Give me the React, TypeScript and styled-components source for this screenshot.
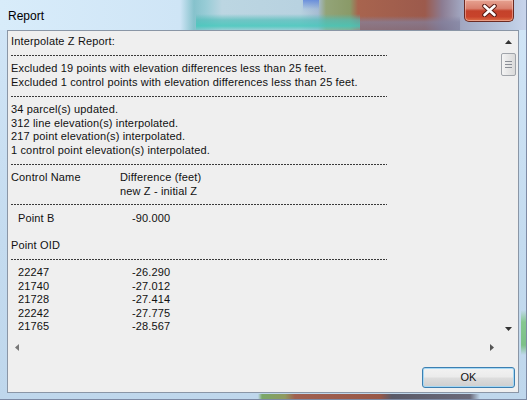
import React from "react";
import styled, { createGlobalStyle } from "styled-components";

const Global = createGlobalStyle`
  html, body { margin: 0; padding: 0; background: #ffffff; }
  body { width: 527px; height: 400px; overflow: hidden; }
`;

const Window = styled.div`
  width: 527px;
  height: 400px;
  box-sizing: border-box;
  display: flex;
  flex-direction: column;
  font-family: "Liberation Sans", Arial, sans-serif;
  color: #111;
  background:
    linear-gradient(90deg, transparent 0 258px, #7aa868 262px, #8f9a60 285px, #a06050 295px, #985848 380px, #5a5a68 392px, #6a6a7a 470px, transparent 480px) 0 100% / 100% 5px no-repeat,
    linear-gradient(180deg, transparent 0 310px, #86c890 322px, #7cc088 345px, transparent 355px) 100% 0 / 5px 100% no-repeat,
    linear-gradient(180deg, #d2e6f7 0%, #c4dbef 60%, #bfd7ec 100%);
  border-right: 1px solid #7d8aa4;
  border-bottom: 1px solid #7d8aa4;
`;

const TitleBar = styled.div`
  height: 30px;
  flex: none;
  display: flex;
  align-items: flex-start;
  justify-content: space-between;
  padding: 0 12px 0 8px;
  box-sizing: border-box;
  background:
    linear-gradient(90deg, rgba(239, 239, 239, 0) 0, rgba(160, 210, 215, 0.0) 100%),
    linear-gradient(180deg, transparent 0 14px, rgba(80, 190, 185, 0.7) 20px, rgba(70, 200, 188, 0.85) 26px, rgba(120, 200, 200, 0.5) 30px) 196px 0 / 164px 100% no-repeat,
    linear-gradient(180deg, transparent 0 16px, rgba(130, 130, 160, 0.7) 22px, rgba(120, 120, 150, 0.6) 30px) 360px 0 / 100px 100% no-repeat,
    linear-gradient(180deg, rgba(90, 130, 220, 0.8) 0, rgba(150, 180, 230, 0.2) 9px, transparent 12px) 303px 0 / 16px 100% no-repeat,
    linear-gradient(90deg, #d8ecfa 0, #cfe5f6 180px, #86c2cc 194px, #98ccd6 206px, #bcd6e2 222px, #b8d2e0 300px, #a6bcd2 318px, #93a478 326px, #8a9a68 350px, #a8644e 358px, #9c5a4c 425px, #8c7c92 442px, #a2a8c2 462px, #bccbe2 512px, #c9d5ec 527px);
`;

const Title = styled.span`
  margin-top: 9px;
  font-size: 12px;
  line-height: 14px;
  color: #000;
`;

const CloseButton = styled.div`
  width: 50px;
  height: 22px;
  box-sizing: border-box;
  border: 1px solid #6b2a22;
  border-top: none;
  border-radius: 0 0 5px 5px;
  background: linear-gradient(180deg, #e6a291 0%, #d9806e 40%, #c4412a 52%, #c8432b 80%, #dd7048 100%);
  box-shadow: inset 0 0 0 1px rgba(255, 220, 210, 0.45);
  display: flex;
  align-items: center;
  justify-content: center;
`;

const Client = styled.div`
  flex: 1;
  margin: 0 7px 6px 7px;
  border: 1px solid #8a96a6;
  background: #efefef;
  display: flex;
  flex-direction: column;
  min-height: 0;
`;

const ReportBox = styled.div`
  height: 325px;
  flex: none;
  margin-right: 1px;
  display: grid;
  grid-template-columns: 1fr 17px;
  grid-template-rows: 1fr 17px;
`;

const Content = styled.div`
  padding: 4px 0 0 3px;
  overflow: hidden;
  font-size: 11px;
  letter-spacing: 0.15px;
  line-height: 13.6px;
  color: #111;
`;

const Line = styled.div`
  height: 13.6px;
  white-space: pre;
`;

const Rule = styled.div`
  height: 13.6px;
  width: 376px;
  display: flex;
  align-items: center;
  &::after {
    content: "";
    display: block;
    width: 100%;
    height: 1px;
    background: repeating-linear-gradient(90deg, #3a3a3a 0 2px, transparent 2px 3px);
  }
`;

const TableRow = styled.div<{ $indent: number; $first: number }>`
  display: grid;
  grid-template-columns: ${(p) => p.$first}px auto;
  padding-left: ${(p) => p.$indent}px;
  height: 13.6px;
  white-space: pre;
`;

const VScroll = styled.div`
  display: flex;
  flex-direction: column;
  align-items: stretch;
`;

const HScroll = styled.div`
  display: flex;
  align-items: center;
  justify-content: space-between;
`;

const ArrowButton = styled.div<{ $h?: number; $w?: number }>`
  height: ${(p) => (p.$h ? `${p.$h}px` : "100%")};
  width: ${(p) => (p.$w ? `${p.$w}px` : "100%")};
  display: flex;
  align-items: center;
  justify-content: center;
  flex: none;
`;

const Track = styled.div`
  flex: 1;
  display: flex;
  flex-direction: column;
  align-items: center;
`;

const Thumb = styled.div`
  margin-top: 1px;
  width: 15px;
  height: 23px;
  box-sizing: border-box;
  border: 1px solid #a0a4aa;
  border-radius: 2px;
  background: linear-gradient(90deg, #f4f4f4, #e6e6e6 50%, #dadada);
  display: flex;
  flex-direction: column;
  align-items: center;
  justify-content: center;
  gap: 2px;
`;

const Grip = styled.span`
  width: 7px;
  height: 1px;
  background: #8a8e96;
`;

const Corner = styled.div``;

const Footer = styled.div`
  flex: 1;
  display: flex;
  justify-content: flex-end;
  align-items: flex-start;
  padding: 11px 3px 0 0;
`;

const OkButton = styled.button`
  width: 93px;
  height: 21px;
  box-sizing: border-box;
  border: 1px solid #3c7fb1;
  border-radius: 3px;
  background: linear-gradient(180deg, #f2f2f2 0%, #ebebeb 48%, #dddddd 52%, #cfcfcf 100%);
  box-shadow: inset 0 0 0 1px #a6d8f4;
  font-family: "Liberation Sans", Arial, sans-serif;
  font-size: 11px;
  color: #111;
  padding: 0;
  line-height: 19px;
`;

const Tri = ({ dir, color = "#333" }: { dir: "up" | "down" | "left" | "right"; color?: string }) => {
  const pts =
    dir === "up"
      ? "0,4 7,4 3.5,0"
      : dir === "down"
      ? "0,0 7,0 3.5,4"
      : dir === "left"
      ? "4,0 4,7 0,3.5"
      : "0,0 0,7 4,3.5";
  const w = dir === "up" || dir === "down" ? 7 : 4;
  const h = dir === "up" || dir === "down" ? 4 : 7;
  return (
    <svg width={w} height={h} viewBox={`0 0 ${w} ${h}`}>
      <polygon points={pts} fill={color} />
    </svg>
  );
};

const CloseX = () => (
  <svg width="15" height="13" viewBox="0 0 15 13">
    <path d="M2.5 2 L12.5 11 M12.5 2 L2.5 11" stroke="#5a1c14" strokeWidth="4.6" strokeLinecap="round" />
    <path d="M2.5 2 L12.5 11 M12.5 2 L2.5 11" stroke="#ffffff" strokeWidth="2.6" strokeLinecap="round" />
  </svg>
);

const points: [string, string][] = [
  ["22247", "-26.290"],
  ["21740", "-27.012"],
  ["21728", "-27.414"],
  ["22242", "-27.775"],
  ["21765", "-28.567"],
];

export default function App() {
  return (
    <>
      <Global />
      <Window>
        <TitleBar>
          <Title>Report</Title>
          <CloseButton>
            <CloseX />
          </CloseButton>
        </TitleBar>
        <Client>
          <ReportBox>
            <Content>
              <Line>Interpolate Z Report:</Line>
              <Rule />
              <Line>Excluded 19 points with elevation differences less than 25 feet.</Line>
              <Line>Excluded 1 control points with elevation differences less than 25 feet.</Line>
              <Rule />
              <Line>34 parcel(s) updated.</Line>
              <Line>312 line elevation(s) interpolated.</Line>
              <Line>217 point elevation(s) interpolated.</Line>
              <Line>1 control point elevation(s) interpolated.</Line>
              <Rule />
              <TableRow $indent={0} $first={109}>
                <span>Control Name</span>
                <span>Difference (feet)</span>
              </TableRow>
              <TableRow $indent={0} $first={109}>
                <span></span>
                <span>new Z - initial Z</span>
              </TableRow>
              <Rule />
              <TableRow $indent={7} $first={114}>
                <span>Point B</span>
                <span>-90.000</span>
              </TableRow>
              <Line> </Line>
              <Line>Point OID</Line>
              <Rule />
              {points.map(([id, v]) => (
                <TableRow key={id} $indent={7} $first={114}>
                  <span>{id}</span>
                  <span>{v}</span>
                </TableRow>
              ))}
            </Content>
            <VScroll>
              <ArrowButton $h={21}>
                <Tri dir="up" />
              </ArrowButton>
              <Track>
                <Thumb>
                  <Grip />
                  <Grip />
                  <Grip />
                </Thumb>
              </Track>
              <ArrowButton $h={21}>
                <Tri dir="down" />
              </ArrowButton>
            </VScroll>
            <HScroll>
              <ArrowButton $w={17}>
                <Tri dir="left" color="#777" />
              </ArrowButton>
              <ArrowButton $w={17}>
                <Tri dir="right" color="#555" />
              </ArrowButton>
            </HScroll>
            <Corner />
          </ReportBox>
          <Footer>
            <OkButton>OK</OkButton>
          </Footer>
        </Client>
      </Window>
    </>
  );
}
